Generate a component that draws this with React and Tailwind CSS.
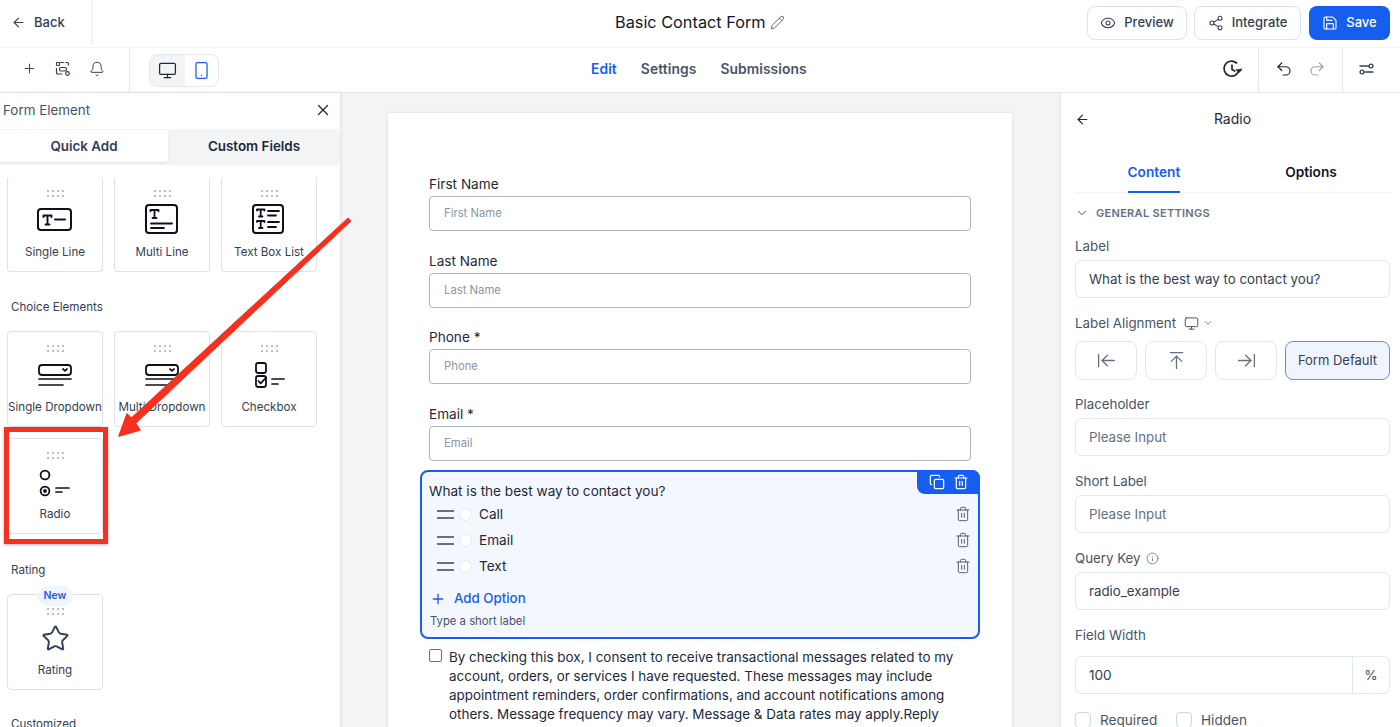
import React from 'react';
import {
  ArrowLeft, ArrowLeftToLine, ArrowRightToLine, ArrowUpToLine, Bell, ChevronDown, Copy, Eye, Info,
  Monitor, Pencil, Plus, Redo2, Save, Share2, Smartphone, Star, Trash2, Undo2, X,
} from 'lucide-react';

const DragDots = () => (
  <div className="grid grid-cols-4 gap-x-[3px] gap-y-[3px] w-[17px] mx-auto">
    {Array.from({ length: 8 }).map((_, i) => (
      <span key={i} className="w-[2px] h-[2px] bg-[#b6bfce]" />
    ))}
  </div>
);

const IconBox = ({ children }) => (
  <svg width="40" height="34" viewBox="0 0 40 34" fill="none" stroke="#0c111d" strokeWidth="1.8" strokeLinecap="round" strokeLinejoin="round">
    {children}
  </svg>
);

const SingleLineIcon = () => (
  <IconBox>
    <rect x="3" y="6" width="33" height="21" rx="3" strokeWidth="2" />
    <path d="M8.5 12.5h8M8.5 12.5v1.5M16.5 12.5v1.5M12.5 12.5v9M10.5 21.5h4M20 16.5h10" strokeWidth="1.9" />
  </IconBox>
);

const MultiLineIcon = () => (
  <IconBox>
    <rect x="4" y="2" width="31" height="28" rx="3" strokeWidth="2" />
    <path d="M8.5 7h8M8.5 7v1.3M16.5 7v1.3M12.5 7v8M10.5 15h4M9 20.5h21M9 25h13" strokeWidth="1.8" />
  </IconBox>
);

const TextBoxListIcon = () => (
  <IconBox>
    <rect x="4" y="2" width="30" height="28" rx="3" strokeWidth="2" />
    <path d="M8 6.5h7.5M8 6.5v1M15.5 6.5v1M11.7 6.5v7M10 13.5h3.5M8 18h7.5M8 18v1M15.5 18v1M11.7 18v7M10 25h3.5M19 8h11M19 12.5h8M19 19h11M19 24h8" strokeWidth="1.8" />
  </IconBox>
);

const DropdownIcon = () => (
  <IconBox>
    <rect x="4" y="7" width="32" height="10" rx="3" strokeWidth="1.8" />
    <path d="M28 11l2 1.8 2-1.8M4 21h32M4 27h24" strokeWidth="1.7" />
  </IconBox>
);

const CheckboxIcon = () => (
  <IconBox>
    <rect x="7" y="5" width="10" height="10" rx="2.2" strokeWidth="1.8" />
    <rect x="7" y="18" width="10" height="11" rx="2.2" strokeWidth="1.8" />
    <path d="M9.5 23l2.2 2.4 5.5-6M23 21h12M23 26h6" strokeWidth="1.7" />
  </IconBox>
);

const RadioIcon = () => (
  <IconBox>
    <circle cx="10" cy="10" r="4.4" strokeWidth="1.8" />
    <circle cx="10" cy="26" r="4.4" strokeWidth="1.8" />
    <circle cx="10" cy="26" r="1.9" fill="#0c111d" stroke="none" />
    <path d="M21 23h13M21 27h6" strokeWidth="1.7" />
  </IconBox>
);

const ElementCard = ({ icon, label, badge, clipped }) => (
  <div className={`relative h-[96px] border border-[#dde2ea] rounded-[4px] bg-white text-center ${clipped ? 'border-t-transparent' : ''}`}>
    {badge && (
      <span className="absolute -top-[9px] left-1/2 -translate-x-1/2 h-[20px] px-[6px] flex items-center rounded-full bg-[#eff4ff] text-[#155eef] text-[10.5px] font-semibold">
        {badge}
      </span>
    )}
    <div className="mt-[13px]"><DragDots /></div>
    <div className="flex justify-center items-center h-[34px] mt-[6px]">{icon}</div>
    <div className="mt-[6.5px] text-[11.6px] leading-[16px] text-[#344054] whitespace-nowrap">{label}</div>
  </div>
);

const SectionLabel = ({ children, className }) => (
  <div className={`pl-[11px] text-[11.6px] leading-[16px] text-[#344054] ${className}`}>{children}</div>
);

const LeftPanel = () => (
  <aside className="relative z-10 w-[341px] shrink-0 bg-white border-r border-[#e4e7ec] shadow-[0_0_4px_rgba(16,24,40,0.08)] overflow-hidden">
    <div className="h-[36px] flex items-center justify-between pl-[3px] pr-[8px] pb-[2px]">
      <span className="text-[13.4px] text-[#475467]">Form Element</span>
      <X size={18} strokeWidth={1.7} className="text-[#1d2939]" />
    </div>
    <div className="h-[36px] bg-[#f3f4f6] flex text-[13.4px] font-semibold pt-[1px]">
      <div className="w-[168px] h-[32px] bg-white rounded-r-[3px] shadow-[0_1px_2px_rgba(16,24,40,0.08)] flex items-center justify-center text-[#344054]">Quick Add</div>
      <div className="flex-1 h-[32px] flex items-center justify-center text-[#1d2939]">Custom Fields</div>
    </div>
    <div className="pt-[11px] pl-[7px] pr-[23px]">
      <div className="grid grid-cols-3 gap-x-[11px]">
        <ElementCard clipped icon={<SingleLineIcon />} label="Single Line" />
        <ElementCard clipped icon={<MultiLineIcon />} label="Multi Line" />
        <ElementCard clipped icon={<TextBoxListIcon />} label="Text Box List" />
      </div>
    </div>
    <SectionLabel className="mt-[27px]">Choice Elements</SectionLabel>
    <div className="pt-[16px] pl-[7px] pr-[23px]">
      <div className="grid grid-cols-3 gap-x-[11px] gap-y-[11px]">
        <ElementCard icon={<DropdownIcon />} label="Single Dropdown" />
        <ElementCard icon={<DropdownIcon />} label="Multi Dropdown" />
        <ElementCard icon={<CheckboxIcon />} label="Checkbox" />
        <ElementCard icon={<RadioIcon />} label="Radio" />
      </div>
    </div>
    <SectionLabel className="mt-[28px]">Rating</SectionLabel>
    <div className="pt-[16px] pl-[7px] pr-[23px]">
      <div className="grid grid-cols-3 gap-x-[11px]">
        <ElementCard icon={<Star size={29} strokeWidth={1.6} className="text-[#344054]" />} label="Rating" badge="New" />
      </div>
    </div>
    <SectionLabel className="mt-[26px]">Customized</SectionLabel>
  </aside>
);

const FormField = ({ label, placeholder, className }) => (
  <div className={className}>
    <div className="text-[13.6px] leading-[17px] text-[#1d2939]">{label}</div>
    <div className="mt-[3px] h-[35px] border border-[#b0b5be] rounded-[4px] flex items-center pl-[14px] text-[11.3px] text-[#8d95a3]">
      {placeholder}
    </div>
  </div>
);

const OptionRow = ({ label }) => (
  <div className="h-[26px] flex items-center pl-[8px] pr-[7px]">
    <div className="w-[17px] flex flex-col gap-[5px]">
      <span className="h-[2px] bg-[#667085]" />
      <span className="h-[2px] bg-[#667085]" />
    </div>
    <span className="ml-[5px] w-[13px] h-[13px] rounded-full bg-white border border-[#e4e7ec]" />
    <span className="ml-[7px] flex-1 text-[13.6px] text-[#1d2939]">{label}</span>
    <Trash2 size={16} strokeWidth={1.4} className="text-[#475467]" />
  </div>
);

const RadioField = () => (
  <div className="relative -mx-[9px] mt-[9.5px] h-[169px] border-2 border-[#155eef] rounded-[8px] bg-[#f4f7ff] pl-[7px] pr-0 pt-[11px]">
    <div className="absolute -top-[2px] -right-[2px] w-[63px] h-[24px] bg-[#155eef] rounded-tr-[8px] rounded-bl-[8px] flex items-center justify-center gap-[8px] text-white">
      <Copy size={16} strokeWidth={1.8} />
      <Trash2 size={16} strokeWidth={1.8} />
    </div>
    <div className="text-[13.6px] leading-[17px] text-[#1d2939]">What is the best way to contact you?</div>
    <div className="mt-[1px]">
      <OptionRow label="Call" />
      <OptionRow label="Email" />
      <OptionRow label="Text" />
    </div>
    <div className="mt-[10px] ml-[1px] flex items-center gap-[8px] text-[#155eef] text-[13.3px] font-medium">
      <Plus size={16} strokeWidth={2} />
      Add Option
    </div>
    <div className="mt-[4px] ml-[1px] text-[11.3px] leading-[16px] text-[#475467]">Type a short label</div>
  </div>
);

const FormCanvas = () => (
  <main className="flex-1 min-w-0 bg-[#f3f4f6] overflow-hidden pt-[20px] pl-[47px]">
    <div className="w-[624px] h-[700px] bg-white shadow-[0_0_3px_rgba(16,24,40,0.1)] px-[41px] pt-[63px]">
      <FormField label="First Name" placeholder="First Name" />
      <FormField label="Last Name" placeholder="Last Name" className="mt-[21.5px]" />
      <FormField label="Phone *" placeholder="Phone" className="mt-[21.5px]" />
      <FormField label="Email *" placeholder="Email" className="mt-[21.5px]" />
      <RadioField />
      <div className="mt-[9px] flex gap-[7px] w-[530px]">
        <span className="mt-[1px] shrink-0 w-[13px] h-[13px] border border-[#667085] rounded-[2px] bg-white" />
        <p className="text-[13.45px] leading-[19px] text-[#1d2939]">
          By checking this box, I consent to receive transactional messages related to my account, orders, or services I have requested. These messages may include appointment reminders, order confirmations, and account notifications among others. Message frequency may vary. Message &amp; Data rates may apply.Reply
        </p>
      </div>
    </div>
  </main>
);

const PropLabel = ({ children, className }) => (
  <div className={`text-[13.3px] leading-[16px] text-[#475467] ${className}`}>{children}</div>
);

const PropInput = ({ value, dark, className }) => (
  <div className={`h-[38px] border border-[#e4e7ec] rounded-[6px] flex items-center pl-[13px] pt-[1px] text-[13.3px] ${dark ? 'text-[#344054]' : 'text-[#667085]'} ${className}`}>
    {value}
  </div>
);

const AlignButton = ({ children, className }) => (
  <div className={`h-[39px] border border-[#e4e7ec] rounded-[8px] flex items-center justify-center text-[#667085] ${className}`}>
    {children}
  </div>
);

const RightPanel = () => (
  <aside className="relative z-10 w-[340px] shrink-0 bg-white border-l border-[#e4e7ec] overflow-hidden pl-[14px] pr-[10px]">
    <div className="relative h-[52px] flex items-center justify-center">
      <ArrowLeft size={15} strokeWidth={1.8} className="absolute left-0 top-[19px] text-[#1d2939]" />
      <span className="text-[14px] text-[#1d2939] -mt-[1px]">Radio</span>
    </div>
    <div className="mt-[15px] h-[33px] flex border-b border-[#f2f4f7] text-[13.7px] font-semibold">
      <div className="w-[157px] flex justify-center">
        <span className="h-[33px] w-[52px] pt-[2px] text-center text-[#155eef] border-b-2 border-[#155eef]">Content</span>
      </div>
      <div className="w-[158px] pt-[2px] text-center text-[#101828]">Options</div>
    </div>
    <div className="mt-[12px] flex items-center gap-[7px] text-[11px] leading-[16px] font-semibold tracking-[0.3px] text-[#667085]">
      <ChevronDown size={14} strokeWidth={1.7} className="text-[#475467]" />
      GENERAL SETTINGS
    </div>
    <PropLabel className="mt-[17px]">Label</PropLabel>
    <PropInput value="What is the best way to contact you?" dark className="mt-[6px]" />
    <PropLabel className="mt-[17px] flex items-center">
      Label Alignment
      <Monitor size={15} strokeWidth={1.6} className="ml-[8px] text-[#475467]" />
      <ChevronDown size={10} strokeWidth={1.8} className="ml-[4px] text-[#475467]" />
    </PropLabel>
    <div className="mt-[10px] flex gap-[8px]">
      <AlignButton className="w-[62px]"><ArrowLeftToLine size={21} strokeWidth={1.5} /></AlignButton>
      <AlignButton className="w-[62px]"><ArrowUpToLine size={21} strokeWidth={1.5} /></AlignButton>
      <AlignButton className="w-[62px]"><ArrowRightToLine size={21} strokeWidth={1.5} /></AlignButton>
      <div className="h-[39px] w-[105px] border border-[#5f8ff5] rounded-[8px] bg-[#f0f4ff] flex items-center justify-center text-[13px] text-[#344054]">Form Default</div>
    </div>
    <PropLabel className="mt-[16px]">Placeholder</PropLabel>
    <PropInput value="Please Input" className="mt-[6px]" />
    <PropLabel className="mt-[17px]">Short Label</PropLabel>
    <PropInput value="Please Input" className="mt-[6px]" />
    <PropLabel className="mt-[17px] flex items-center gap-[5px]">
      Query Key
      <Info size={13} strokeWidth={1.5} className="text-[#667085]" />
    </PropLabel>
    <PropInput value="radio_example" dark className="mt-[6px]" />
    <PropLabel className="mt-[17px]">Field Width</PropLabel>
    <div className="mt-[13px] flex h-[38px] border border-[#e4e7ec] rounded-[6px] text-[13.6px] text-[#344054]">
      <div className="flex-1 flex items-center pl-[13px]">100</div>
      <div className="w-[37px] border-l border-[#e4e7ec] flex items-center justify-center text-[#475467]">%</div>
    </div>
    <div className="mt-[18px] flex items-center text-[13.6px] leading-[16px] text-[#475467]">
      <span className="w-[16px] h-[16px] border border-[#d0d5dd] rounded-[4px]" />
      <span className="ml-[9px] w-[76px]">Required</span>
      <span className="w-[16px] h-[16px] border border-[#d0d5dd] rounded-[4px]" />
      <span className="ml-[9px]">Hidden</span>
    </div>
  </aside>
);

const HeaderButton = ({ icon, label, className }) => (
  <div className={`h-[34px] border border-[#dde2ea] rounded-[8px] flex items-center justify-center gap-[8px] text-[13px] font-medium text-[#344054] ${className}`}>
    {icon}
    {label}
  </div>
);

const Header = () => (
  <header className="relative h-[48px] shrink-0 flex items-center border-b border-[#f2f4f7] bg-white">
    <div className="w-[93px] h-[45px] -mt-[2px] border-r-2 border-[#f2f4f7] flex items-center pl-[11px] gap-[8px] text-[13px] font-medium text-[#344054]">
      <ArrowLeft size={15} strokeWidth={1.8} />
      Back
    </div>
    <div className="absolute left-[615px] top-[12px] flex items-center gap-[4px]">
      <span className="text-[16.3px] leading-[20px] text-[#101828]">Basic Contact Form</span>
      <Pencil size={15} strokeWidth={1.4} className="text-[#475467]" />
    </div>
    <div className="ml-auto pr-[10px] -mt-[2px] flex items-center gap-[7px]">
      <HeaderButton icon={<Eye size={16} strokeWidth={1.6} />} label="Preview" className="w-[100px]" />
      <HeaderButton icon={<Share2 size={16} strokeWidth={1.6} />} label="Integrate" className="w-[107px]" />
      <div className="h-[34px] w-[81px] ml-[1px] rounded-[8px] bg-[#155eef] flex items-center justify-center gap-[8px] text-[13px] font-medium text-white">
        <Save size={16} strokeWidth={1.7} />
        Save
      </div>
    </div>
  </header>
);

const ScanIcon = () => (
  <svg width="16" height="16" viewBox="0 0 16 16" fill="none" stroke="#344054" strokeWidth="1.2" strokeLinecap="round" strokeLinejoin="round">
    <path d="M5.5 1.5h3M11 1.5h1.5a1 1 0 0 1 1 1V4M1.5 7.5V12a1 1 0 0 0 1 1H7" />
    <rect x="1.5" y="1.5" width="3" height="3" rx="0.8" />
    <rect x="4.5" y="6.5" width="7" height="3.5" rx="1.5" />
    <circle cx="12.5" cy="12.5" r="1.8" />
  </svg>
);

const HistoryIcon = () => (
  <svg width="20" height="20" viewBox="0 0 20 20" fill="none" stroke="#1d2939" strokeWidth="1.7" strokeLinecap="round" strokeLinejoin="round">
    <path d="M17 10.5A7.5 7.5 0 1 1 14.5 4" />
    <path d="M10 6v4.5l2.7 1.6M14.8 10.8l2.4 2 2-2.4" />
  </svg>
);

const TuneIcon = () => (
  <svg width="15" height="12" viewBox="0 0 15 12" fill="none" stroke="#344054" strokeWidth="1.4" strokeLinecap="round">
    <path d="M1 3h8.5M6 9h8" />
    <circle cx="12" cy="3" r="1.9" />
    <circle cx="3" cy="9" r="1.9" />
  </svg>
);

const Toolbar = () => (
  <div className="relative h-[45px] shrink-0 flex items-center bg-white border-b border-[#e4e7ec]">
    <div className="w-[130px] h-full border-r border-[#e4e7ec] flex items-center pl-[22px] pb-[3px] gap-[18px]">
      <Plus size={15} strokeWidth={1.5} className="text-[#344054]" />
      <ScanIcon />
      <Bell size={16} strokeWidth={1.5} className="text-[#344054]" />
    </div>
    <div className="ml-[19px] w-[70px] h-[33px] border border-[#e4e7ec] rounded-[8px] flex overflow-hidden">
      <div className="w-[35px] bg-[#f2f4f7] flex items-center justify-center">
        <Monitor size={19} strokeWidth={1.6} className="text-[#1d2939]" />
      </div>
      <div className="flex-1 flex items-center justify-center">
        <Smartphone size={19} strokeWidth={1.6} className="text-[#155eef]" />
      </div>
    </div>
    <nav className="absolute left-[591px] top-[13px] flex gap-[24px] text-[13.8px] leading-[17px] font-semibold tracking-[0.1px] text-[#475467]">
      <span className="text-[#155eef]">Edit</span>
      <span>Settings</span>
      <span>Submissions</span>
    </nav>
    <div className="ml-auto h-full flex items-center">
      <div className="w-[50px] pb-[3px] pr-[2px] flex justify-center"><HistoryIcon /></div>
      <div className="h-full w-[85px] border-x border-[#e4e7ec] pb-[3px] flex items-center justify-center gap-[15px]">
        <Undo2 size={18} strokeWidth={1.6} className="text-[#1d2939]" />
        <Redo2 size={18} strokeWidth={1.6} className="text-[#98a2b3]" />
      </div>
      <div className="w-[57px] pb-[3px] pr-[10px] flex justify-center"><TuneIcon /></div>
    </div>
  </div>
);

// red annotation from the screenshot, sits over the panel
const Annotation = () => (
  <>
    <div className="absolute z-20 left-[4px] top-[427px] w-[104px] h-[117px] border-[5px] border-[#f5301f] shadow-[0_1px_3px_rgba(0,0,0,0.3)]" />
    <svg className="absolute z-20 left-[110px] top-[210px]" width="250" height="235" viewBox="0 0 250 235">
      <path d="M238 8L241 11L24 215L19 210Z" fill="#f5301f" stroke="#f5301f" strokeWidth="1" strokeLinejoin="round" />
      <path d="M9 226L17 204L23 210L30 220Z" fill="#f5301f" stroke="#f5301f" strokeWidth="1.5" strokeLinejoin="round" />
    </svg>
  </>
);

export default function App() {
  return (
    <div className="relative w-[1400px] h-[727px] overflow-hidden bg-white flex flex-col font-[Inter,sans-serif]">
      <Header />
      <Toolbar />
      <div className="flex-1 min-h-0 flex">
        <LeftPanel />
        <FormCanvas />
        <RightPanel />
      </div>
      <Annotation />
    </div>
  );
}
